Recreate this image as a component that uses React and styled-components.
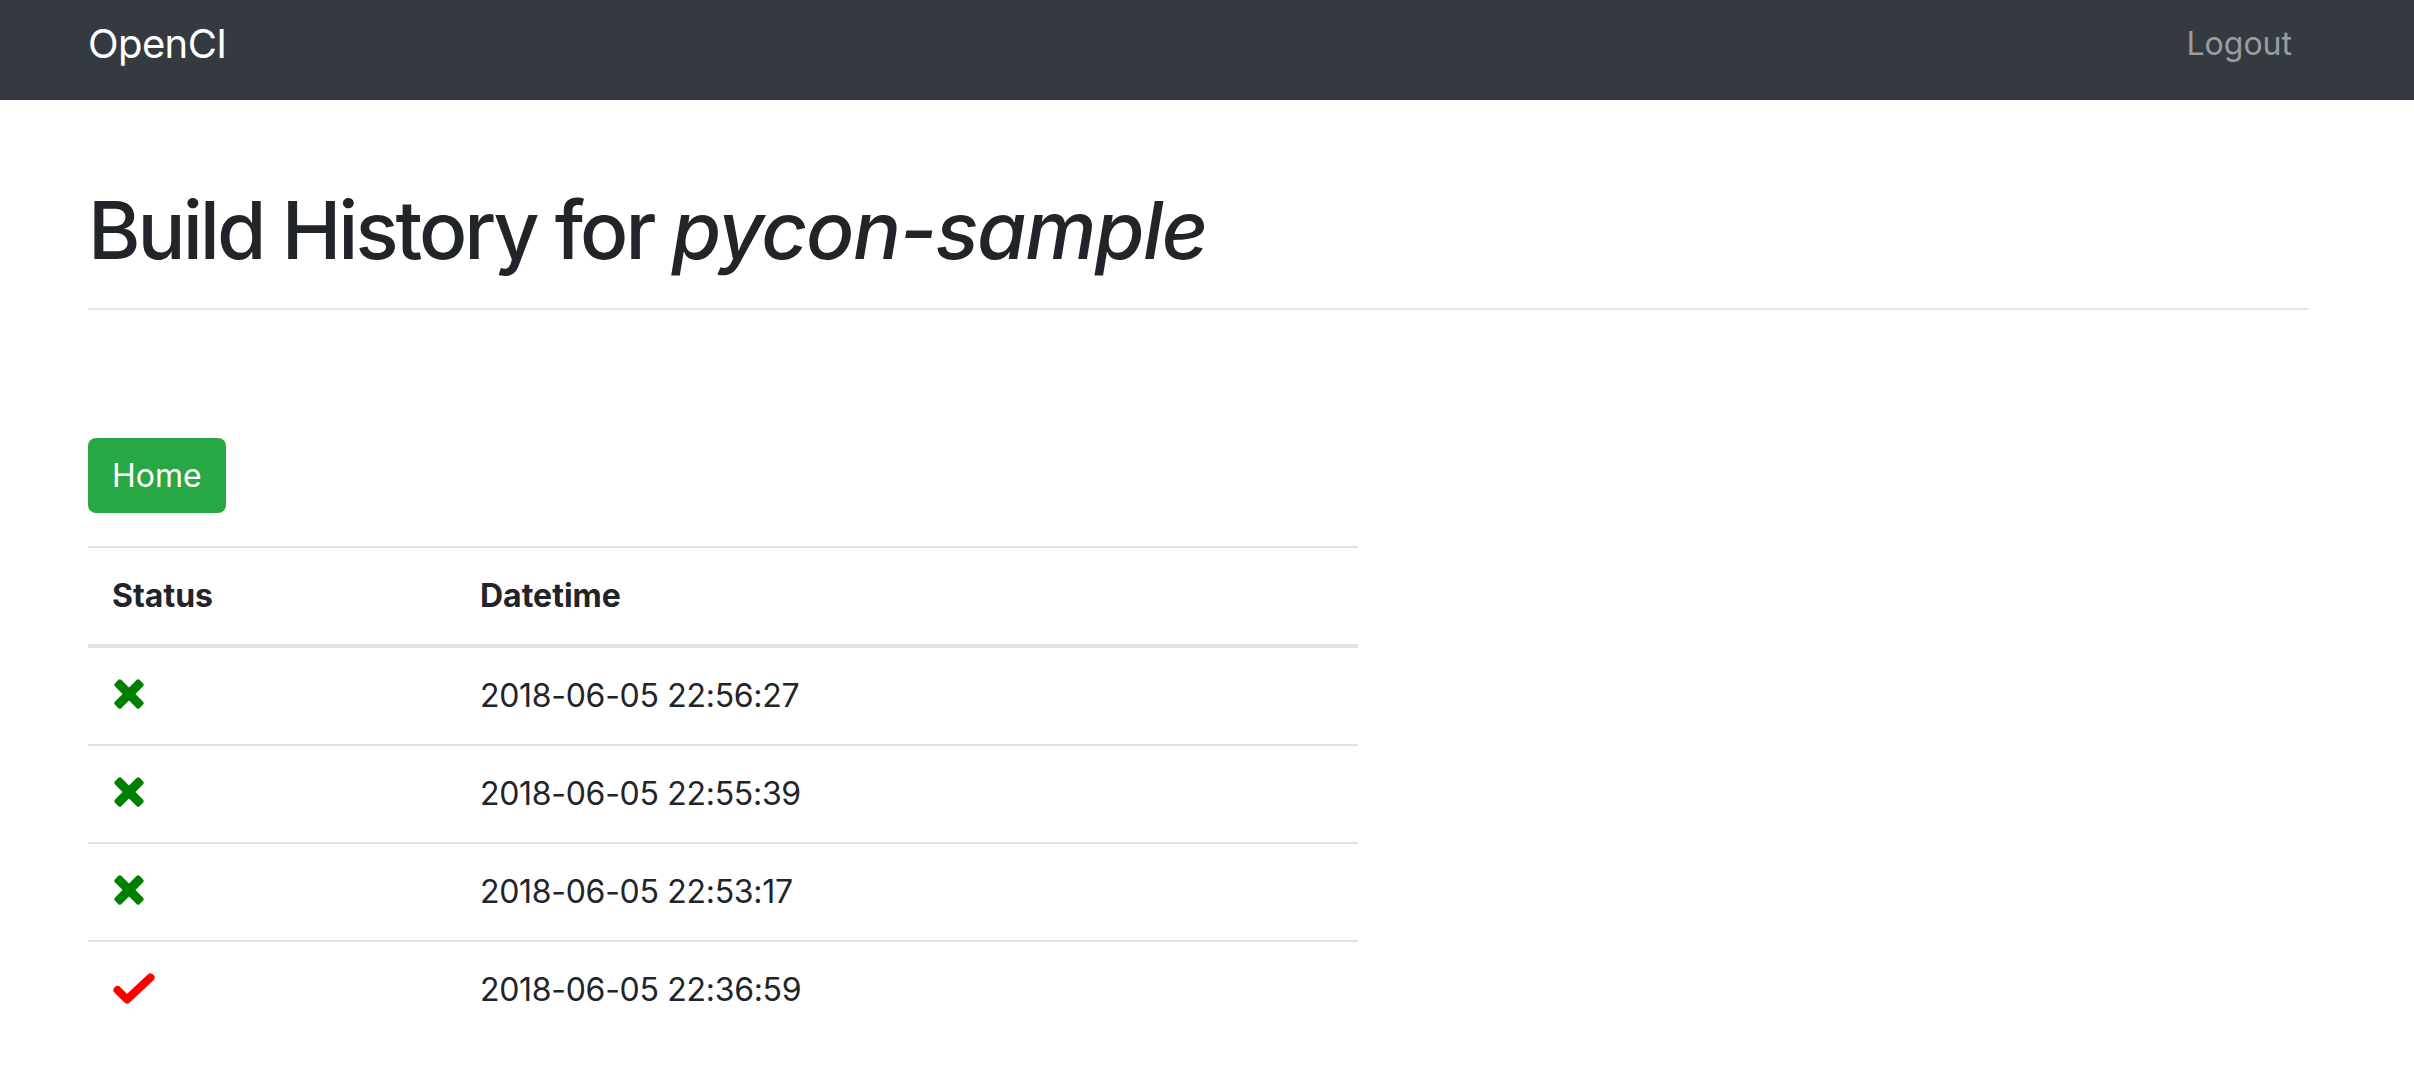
import React from 'react';
import styled, { createGlobalStyle } from 'styled-components';

const GlobalStyle = createGlobalStyle`
  body {
    margin: 0;
    background: #fff;
    color: #212529;
    font-family: Inter, "Noto Sans", "Liberation Sans", sans-serif;
  }
`;

const Navbar = styled.nav`
  height: 100px;
  box-sizing: border-box;
  padding-bottom: 12px;
  background: #343a40;
  display: flex;
  align-items: center;
`;

const Container = styled.div`
  width: 2220px;
  margin-left: 88px;
`;

const NavInner = styled(Container)`
  display: flex;
  align-items: center;
  justify-content: space-between;
`;

const Brand = styled.a`
  font-size: 40px;
  line-height: 60px;
  letter-spacing: -0.6px;
  color: #fff;
  text-decoration: none;
`;

const NavLink = styled.a`
  font-size: 32px;
  line-height: 48px;
  padding: 0 16px;
  color: rgba(255, 255, 255, 0.5);
  text-decoration: none;
`;

const Main = styled(Container)`
  padding-top: 82px;
`;

const Title = styled.h1`
  margin: 0 0 30px;
  font-size: 80px;
  line-height: 96px;
  font-weight: 500;
  letter-spacing: -3px;
  em {
    font-style: italic;
    letter-spacing: -1.4px;
  }
`;

const Divider = styled.hr`
  margin: 0 0 128px;
  border: 0;
  border-top: 2px solid rgba(0, 0, 0, 0.1);
`;

const Button = styled.a`
  display: inline-block;
  box-sizing: border-box;
  height: 75px;
  padding: 0 24px;
  border-radius: 8px;
  background: #28a745;
  color: #fff;
  font-size: 32px;
  line-height: 75px;
  text-decoration: none;
`;

const Table = styled.table`
  width: 1270px;
  margin-top: 33px;
  border-collapse: separate;
  border-spacing: 0;
  font-size: 32px;
  line-height: 48px;
`;

const Th = styled.th`
  padding: 24px;
  text-align: left;
  font-weight: 700;
  border-top: 2px solid #dee2e6;
  border-bottom: 4px solid #dee2e6;
  width: ${p => p.w || 'auto'};
`;

const Row = styled.tr`
  &:not(:last-child) td {
    border-bottom: 2px solid #dee2e6;
  }
`;

const Td = styled.td`
  padding: 24px;
  vertical-align: top;
  letter-spacing: -0.3px;
`;

const IconBox = styled.div`
  height: 48px;
  padding: 0 0 4px 1px;
  box-sizing: border-box;
  display: flex;
  align-items: center;
`;

const Cross = () => (
  <svg width="32" height="32" viewBox="0 0 32 32">
    <rect x="-1.5" y="11.5" width="35" height="9" rx="2" fill="#008000" transform="rotate(45 16 16)" />
    <rect x="-1.5" y="11.5" width="35" height="9" rx="2" fill="#008000" transform="rotate(-45 16 16)" />
  </svg>
);

const Check = () => (
  <svg width="42" height="31" viewBox="0 0 42 31">
    <polyline points="4.5,17 14,26.5 37.5,4.5" fill="none" stroke="#ff0000" strokeWidth="8" strokeLinecap="round" strokeLinejoin="round" />
  </svg>
);

const builds = [
  { ok: false, time: '2018-06-05 22:56:27' },
  { ok: false, time: '2018-06-05 22:55:39' },
  { ok: false, time: '2018-06-05 22:53:17' },
  { ok: true, time: '2018-06-05 22:36:59' },
];

export default function App() {
  return (
    <>
      <GlobalStyle />
      <Navbar>
        <NavInner>
          <Brand href="#">OpenCI</Brand>
          <NavLink href="#">Logout</NavLink>
        </NavInner>
      </Navbar>
      <Main>
        <Title>Build History for <em>pycon-sample</em></Title>
        <Divider />
        <Button href="#">Home</Button>
        <Table>
          <thead>
            <tr>
              <Th w="320px">Status</Th>
              <Th>Datetime</Th>
            </tr>
          </thead>
          <tbody>
            {builds.map(b => (
              <Row key={b.time}>
                <Td>
                  <IconBox>{b.ok ? <Check /> : <Cross />}</IconBox>
                </Td>
                <Td>{b.time}</Td>
              </Row>
            ))}
          </tbody>
        </Table>
      </Main>
    </>
  );
}
